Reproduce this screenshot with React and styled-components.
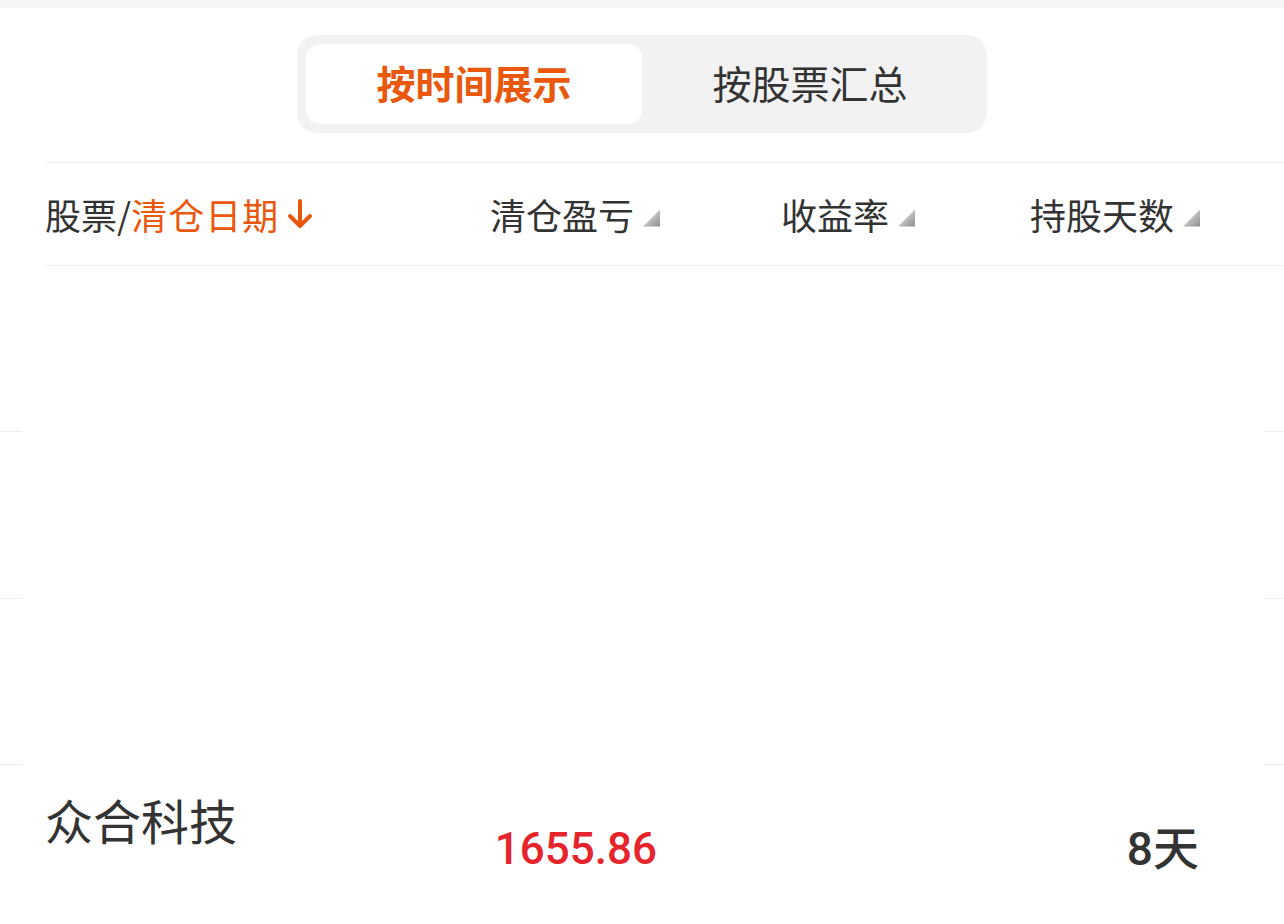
import React from 'react';
import styled, { createGlobalStyle } from 'styled-components';

const GlobalStyle = createGlobalStyle`
  html, body {
    margin: 0;
    padding: 0;
    background: #ffffff;
  }
  body {
    font-family: "Noto Sans CJK SC", "Noto Sans", sans-serif;
    color: #333333;
    overflow: hidden;
  }
`;

const orange = '#e9580c';

const Page = styled.div`
  width: 1284px;
  height: 924px;
  overflow: hidden;
  background: #ffffff;
`;

const TopBand = styled.div`
  height: 8px;
  background: #f5f5f5;
`;

const TabArea = styled.div`
  display: flex;
  justify-content: center;
  padding: 27px 0 29px;
`;

const Segmented = styled.div`
  display: flex;
  padding: 9px;
  background: #f2f2f2;
  border-radius: 20px;
`;

const Tab = styled.div`
  width: 336px;
  height: 80px;
  padding-bottom: 4px;
  box-sizing: border-box;
  display: flex;
  align-items: center;
  justify-content: center;
  border-radius: 14px;
  font-size: 39px;
  line-height: 1;
  background: ${({ $active }) => ($active ? '#ffffff' : 'transparent')};
  color: ${({ $active }) => ($active ? orange : '#333333')};
  font-weight: ${({ $active }) => ($active ? 700 : 400)};
`;

const columns = `1fr 230px 255px 285px`;

const HeaderRow = styled.div`
  margin-left: 45px;
  height: 102px;
  padding-right: 84px;
  display: grid;
  grid-template-columns: ${columns};
  align-items: center;
  border-top: 1px solid #eeeeee;
  border-bottom: 1px solid #eeeeee;
  font-size: 36px;
  line-height: 1;
  color: #333333;
`;

const FirstHead = styled.div`
  display: flex;
  align-items: center;
  svg {
    margin-left: 8px;
  }
`;

const Accent = styled.span`
  color: ${orange};
  letter-spacing: 1px;
`;

const SortHead = styled.div`
  display: flex;
  align-items: center;
  justify-content: flex-end;
`;

const SortTri = styled.span`
  width: 17px;
  height: 17px;
  margin-left: 9px;
  margin-top: 8px;
  background: linear-gradient(135deg, #eeeeee 0%, #c4c4c4 45%, #8c8c8c 100%);
  clip-path: polygon(100% 0, 100% 100%, 0 100%);
`;

const Row = styled.div`
  position: relative;
  height: ${({ $h }) => $h}px;
  display: grid;
  grid-template-columns: ${columns};
  align-items: center;
  padding: 0 84px 0 45px;

  ${({ $edges }) =>
    $edges &&
    `
    &::before, &::after {
      content: '';
      position: absolute;
      top: 0;
      height: 1px;
      background: #eeeeee;
    }
    &::before { left: 0; width: 22px; }
    &::after { right: 0; width: 20px; }
  `}
`;

const Name = styled.div`
  align-self: start;
  padding-top: 31px;
  font-size: 48px;
  line-height: 1;
  color: #333333;
`;

const Value = styled.div`
  justify-self: end;
  padding-right: ${({ $pr }) => $pr}px;
  padding-top: 4px;
  font-family: Roboto, "Noto Sans CJK SC", sans-serif;
  font-weight: 500;
  font-size: ${({ $size }) => $size}px;
  line-height: 1;
  color: ${({ $color }) => $color || '#333333'};
`;

function DownArrow() {
  return (
    <svg width="26" height="30" viewBox="0 0 26 30">
      <path
        d="M13 2v25M3 17l10 10 10-10"
        stroke={orange}
        strokeWidth="4"
        fill="none"
        strokeLinecap="round"
        strokeLinejoin="round"
      />
    </svg>
  );
}

function SortLabel({ children }) {
  return (
    <SortHead>
      <span>{children}</span>
      <SortTri />
    </SortHead>
  );
}

const rows = [
  { h: 165, edges: false },
  { h: 167, edges: true },
  { h: 166, edges: true },
];

export default function App() {
  return (
    <Page>
      <GlobalStyle />
      <TopBand />
      <TabArea>
        <Segmented>
          <Tab $active>按时间展示</Tab>
          <Tab>按股票汇总</Tab>
        </Segmented>
      </TabArea>
      <HeaderRow>
        <FirstHead>
          股票/<Accent>清仓日期</Accent>
          <DownArrow />
        </FirstHead>
        <SortLabel>清仓盈亏</SortLabel>
        <SortLabel>收益率</SortLabel>
        <SortLabel>持股天数</SortLabel>
      </HeaderRow>
      {rows.map((r, i) => (
        <Row key={i} $h={r.h} $edges={r.edges} />
      ))}
      <Row $h={166} $edges>
        <Name>众合科技</Name>
        <Value $color="#e6242b" $size={44} $pr={3}>1655.86</Value>
        <div />
        <Value $size={46} $pr={1}>8天</Value>
      </Row>
    </Page>
  );
}
